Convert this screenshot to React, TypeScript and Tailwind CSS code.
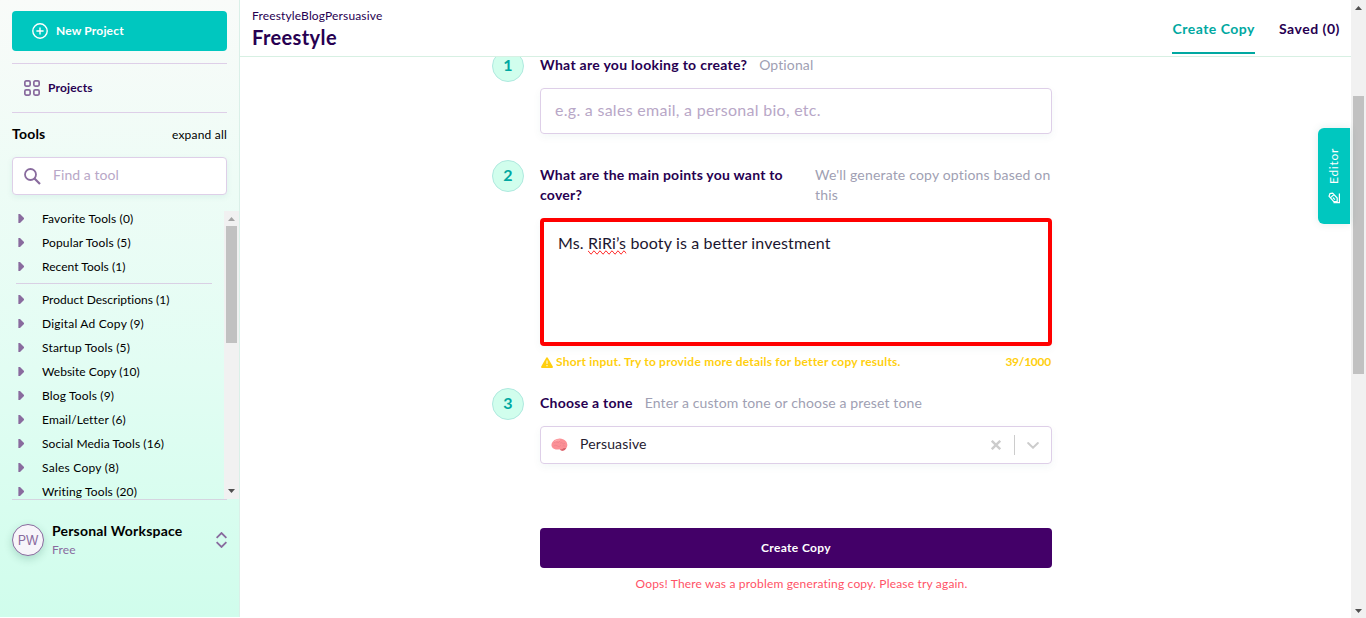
import type { ReactNode } from 'react';

const pinnedTools: [string, string][] = [
  ['Favorite Tools (0)', 'tracking-[0.14px]'],
  ['Popular Tools (5)', 'tracking-[0.14px]'],
  ['Recent Tools (1)', 'tracking-[0.04px]'],
];

const toolGroups: [string, string][] = [
  ['Product Descriptions (1)', 'tracking-[0.02px]'],
  ['Digital Ad Copy (9)', 'tracking-[0.2px]'],
  ['Startup Tools (5)', 'tracking-[0.18px]'],
  ['Website Copy (10)', 'tracking-[0.03px]'],
  ['Blog Tools (9)', 'tracking-[0.16px]'],
  ['Email/Letter (6)', 'tracking-[0.17px]'],
  ['Social Media Tools (16)', 'tracking-[0.09px]'],
  ['Sales Copy (8)', 'tracking-[0.25px]'],
  ['Writing Tools (20)', 'tracking-[0.13px]'],
];

function ToolRow({ label, tracking }: { label: string; tracking: string }) {
  return (
    <li className="flex h-6 items-center pl-[18px]">
      <svg className="h-[9px] w-[6px] shrink-0 -translate-y-px" viewBox="0 0 6 9" fill="#896b9e">
        <path d="M0.4 0H2L6 4v1L2 9H0.4Z" />
      </svg>
      <span className={`ml-[18px] text-xs whitespace-nowrap text-black ${tracking}`}>{label}</span>
    </li>
  );
}

function Step({ number, className, children }: { number: number; className: string; children: ReactNode }) {
  return (
    <section className={`flex gap-4 ${className}`}>
      <div className="flex size-8 shrink-0 items-center justify-center rounded-full border border-[#afe9df] bg-[#d1feed] pb-0.5 text-base font-bold text-[#00a8a1]">
        {number}
      </div>
      <div className="w-[512px]">{children}</div>
    </section>
  );
}

function Arrow({ up, color }: { up?: boolean; color: string }) {
  return (
    <svg className="h-1 w-[7px]" viewBox="0 0 7 4" fill={color}>
      <path d={up ? 'M0 4H7L3.5 0Z' : 'M0 0H7L3.5 4Z'} />
    </svg>
  );
}

function Sidebar() {
  return (
    <aside className="flex h-[617px] w-60 shrink-0 flex-col border-r border-[#daf0e8] bg-linear-to-b from-[#f9fbf9] via-[#e2fdf3] via-60% to-[#d0fdec] pt-[11px]">
      <div className="flex flex-col px-3">
        <button className="flex h-10 items-center gap-2 rounded-sm bg-[#00c7bf] pl-5 text-xs font-bold tracking-[0.17px] text-white">
          <svg className="size-4" viewBox="0 0 16 16" fill="none" stroke="currentColor" strokeWidth="1.4">
            <circle cx="8" cy="8" r="7.2" />
            <path d="M8 4.4v7.2M4.4 8h7.2" />
          </svg>
          New Project
        </button>
        <div className="mt-3 flex h-[50px] items-center gap-2 border-y border-[#decfe8] pl-3 text-xs font-bold tracking-[0.15px] text-[#270051]">
          <svg className="size-4" viewBox="0 0 16 16" fill="none" stroke="#896b9e" strokeWidth="1.7">
            <rect x="0.85" y="0.85" width="5.3" height="5.3" rx="1.3" />
            <rect x="9.85" y="0.85" width="5.3" height="5.3" rx="1.3" />
            <rect x="0.85" y="9.85" width="5.3" height="5.3" rx="1.3" />
            <rect x="9.85" y="9.85" width="5.3" height="5.3" rx="1.3" />
          </svg>
          Projects
        </div>
        <div className="flex h-11 items-center justify-between pb-[2px] text-black">
          <span className="text-sm font-bold tracking-[0.2px]">Tools</span>
          <span className="pt-px text-xs tracking-[0.2px]">expand all</span>
        </div>
        <div className="flex h-[38px] items-center gap-3 rounded-sm border border-[#decfe8] bg-white pl-[11px] text-sm tracking-[0.07px] text-[#b8a7c7] shadow-[0_2px_6px_rgba(0,120,100,0.08)]">
          <svg className="size-[17px]" viewBox="0 0 17 17" fill="none" stroke="#896b9e" strokeWidth="1.8">
            <circle cx="6.5" cy="6.5" r="5.5" />
            <path d="M10.5 10.5L16 16" strokeWidth="2.2" />
          </svg>
          <span className="pb-0.5">Find a tool</span>
        </div>
      </div>
      <div className="mt-4 flex h-[288px] overflow-hidden">
        <div className="flex-1">
          <ul className="-mt-1">
            {pinnedTools.map(([label, tracking]) => (
              <ToolRow key={label} label={label} tracking={tracking} />
            ))}
          </ul>
          <div className="mt-1 mr-3 mb-1 ml-4 h-px bg-[#d9d0e4]" />
          <ul>
            {toolGroups.map(([label, tracking]) => (
              <ToolRow key={label} label={label} tracking={tracking} />
            ))}
          </ul>
        </div>
        <div className="flex w-[15px] flex-col items-center bg-[#f1f1f1] pt-[6px] pb-[6px]">
          <Arrow up color="#a3a3a3" />
          <div className="mt-[5px] h-[117px] w-[11px] bg-[#c1c1c1]" />
          <div className="mt-auto">
            <Arrow color="#505050" />
          </div>
        </div>
      </div>
      <div className="mx-3 flex border-t border-[#d5d5e0] pt-6">
        <div className="flex size-8 items-center justify-center rounded-full border border-[#896b9e] bg-[#f7f5fa] pt-0.5 font-['Inter',sans-serif] text-[13px] tracking-[-0.2px] text-[#896b9e] shadow-[0_3px_8px_rgba(0,80,60,0.2)]">
          PW
        </div>
        <div className="ml-2">
          <div className="-mt-0.5 mb-px text-sm leading-[18px] font-bold tracking-[0.2px] text-black">Personal Workspace</div>
          <div className="text-xs leading-[18px] tracking-[0.15px] text-[#896b9e]">Free</div>
        </div>
        <svg className="mt-2 ml-auto h-4 w-[11px]" viewBox="0 0 11 16" fill="none" stroke="#896b9e" strokeWidth="1.8">
          <path d="M0.6 5.8L5.5 1L10.4 5.8M0.6 10.2L5.5 15L10.4 10.2" />
        </svg>
      </div>
    </aside>
  );
}

function Header() {
  return (
    <header className="flex h-[57px] shrink-0 justify-between border-b border-[#d7f0e3] bg-white pr-[11px] pl-3 text-[#270051]">
      <div className="pt-2">
        <div className="text-xs leading-4 tracking-[0.15px]">FreestyleBlogPersuasive</div>
        <h1 className="text-xl leading-[26px] font-bold tracking-[0.39px]">Freestyle</h1>
      </div>
      <nav className="flex h-[54px] gap-6 text-sm font-bold">
        <div className="flex items-center border-b-2 border-[#00a8a1] pt-[5px] tracking-[0.5px] text-[#00a8a1]">Create Copy</div>
        <div className="flex items-center pt-[3px] tracking-[0.52px]">Saved (0)</div>
      </nav>
    </header>
  );
}

function Form() {
  return (
    <main className="flex h-[561px] flex-col overflow-hidden pl-[252px] text-sm">
      <Step number={1} className="-mt-[7px]">
        <div className="mt-[5px] flex gap-3 leading-5">
          <h2 className="font-bold tracking-[0.29px] text-[#270051]">What are you looking to create?</h2>
          <span className="tracking-[0.13px] text-[#a09fb3]">Optional</span>
        </div>
        <div className="mt-[13px] flex h-[46px] items-center rounded-sm border border-[#decfe8] pb-0.5 pl-[14px] text-base tracking-[0.28px] text-[#b8a7c7] shadow-[0_3px_8px_rgba(0,100,90,0.05)]">
          e.g. a sales email, a personal bio, etc.
        </div>
      </Step>
      <Step number={2} className="mt-[26px]">
        <div className="mt-[5px] flex leading-5">
          <h2 className="w-[275px] pr-6 font-bold tracking-[0.23px] text-[#270051]">
            What are the main points you want to<br />cover?
          </h2>
          <p className="tracking-[0.18px] whitespace-nowrap text-[#a09fb3]">
            We'll generate copy options based on<br />this
          </p>
        </div>
        <div className="mt-[13px] h-32 rounded-sm border-4 border-[#ff0000] px-[14px] pt-[9px] text-base tracking-[0.14px] text-[#1c1630] shadow-[0_3px_8px_rgba(0,100,90,0.05)]">
          Ms. <span className="[text-decoration-line:spelling-error]">RiRi’s</span> booty is a better investment
        </div>
        <div className="mt-2 flex h-4 items-center text-xs font-bold text-[#ffcf0f]">
          <svg className="mr-[3px] ml-px h-[11px] w-3" viewBox="0 0 12 11" fill="currentColor">
            <path d="M6 0.2Q6.5 0.2 6.8 0.7L11.8 9.6Q12.2 11 11 11H1Q-0.2 11 0.2 9.6L5.2 0.7Q5.5 0.2 6 0.2Z" />
            <path d="M6 3.5v3.4M6 8v1.3" stroke="#fff" strokeWidth="1" />
          </svg>
          <span className="tracking-[0.21px]">Short input. Try to provide more details for better copy results.</span>
          <span className="mr-px ml-auto tracking-[-0.25px]">39/1000</span>
        </div>
      </Step>
      <Step number={3} className="mt-[18px]">
        <div className="mt-[5px] flex gap-3 leading-5">
          <h2 className="font-bold tracking-[0.26px] text-[#270051]">Choose a tone</h2>
          <span className="tracking-[0.13px] text-[#a09fb3]">Enter a custom tone or choose a preset tone</span>
        </div>
        <div className="mt-[13px] flex h-[38px] items-center rounded-sm border border-[#decfe8] pl-[10px] shadow-[0_3px_8px_rgba(0,100,90,0.05)]">
          <svg className="h-[14px] w-[17px]" viewBox="0 0 17 14">
            <path d="M1 9Q-0.3 6.5 1.5 4Q3 1.5 6 1Q9 -0.3 12 1.2Q15.4 2.4 16 5.5Q17 8 15 10.5Q13.8 13 11 12.6Q9.5 12.2 8.5 11.3Q5.5 12 3.5 11Q1.5 10.5 1 9Z" fill="#fb9096" />
            <path d="M8.5 11.3Q11 11.7 12.5 10.2L15.3 10Q13.8 13.2 11 12.8Q9.5 12.4 8.5 11.3Z" fill="#d6616b" />
            <path d="M3 5Q4.5 3 6 4.2T9 3M2.8 8Q5 6.5 6.5 8T10 7.4M9 5.2Q11 4 12 5.5T14 5M11.5 8Q13 7.2 14.3 8.4" fill="none" stroke="#e9808a" strokeWidth="0.6" />
            <path d="M3.5 3.4Q6 1.5 9 2" fill="none" stroke="#ffb4b6" strokeWidth="0.9" />
          </svg>
          <span className="ml-3 pb-0.5 tracking-[0.15px] text-[#25202f]">Persuasive</span>
          <svg className="mr-[13px] ml-auto size-[10px]" viewBox="0 0 10 10" fill="none" stroke="#ccc" strokeWidth="2.4">
            <path d="M0.8 0.8L9.2 9.2M9.2 0.8L0.8 9.2" />
          </svg>
          <span className="h-5 w-px bg-[#ccc]" />
          <svg className="mr-3 ml-3 h-[7px] w-3" viewBox="0 0 12 7" fill="none" stroke="#ccc" strokeWidth="2" strokeLinecap="round">
            <path d="M1.1 1.1L6 5.7L10.9 1.1" />
          </svg>
        </div>
      </Step>
      <div className="mt-16 ml-12 w-[512px] text-center text-xs">
        <button className="h-10 w-full rounded-sm bg-[#430068] font-bold tracking-[0.36px] text-white">Create Copy</button>
        <p className="mt-2 pl-[11px] tracking-[0.18px] text-[#ff5266]">Oops! There was a problem generating copy. Please try again.</p>
      </div>
    </main>
  );
}

export default function App() {
  return (
    <div className="relative flex h-[618px] w-[1366px] overflow-hidden bg-white font-['Lato',sans-serif]">
      <Sidebar />
      <div className="flex w-[1111px] flex-col">
        <Header />
        <Form />
      </div>
      <div className="flex w-[15px] flex-col items-center bg-[#f1f1f1] pt-[6px] pb-[5px]">
        <Arrow up color="#505050" />
        <div className="mt-[86px] h-[278px] w-[11px] bg-[#c1c1c1]" />
        <div className="mt-auto">
          <Arrow color="#505050" />
        </div>
      </div>
      <button className="absolute top-32 right-4 flex h-24 w-8 flex-col items-center justify-center gap-2 rounded-l-md bg-[#00c7bf] text-white shadow-[0_0_8px_rgba(0,100,90,0.12)]">
        <span className="rotate-180 text-xs tracking-[0.7px] [writing-mode:vertical-rl]">Editor</span>
        <svg className="size-3" viewBox="0 0 12 12" fill="none" stroke="currentColor" strokeWidth="1.2">
          <path d="M1 4.2L2 1.6L4.6 1.2L9.2 6V9.6H5.8L1 4.2ZM2.6 5.6L5.8 2.6M5 5.6L6.8 7.6M11.4 1.5V10.6H5.5" />
        </svg>
      </button>
    </div>
  );
}
